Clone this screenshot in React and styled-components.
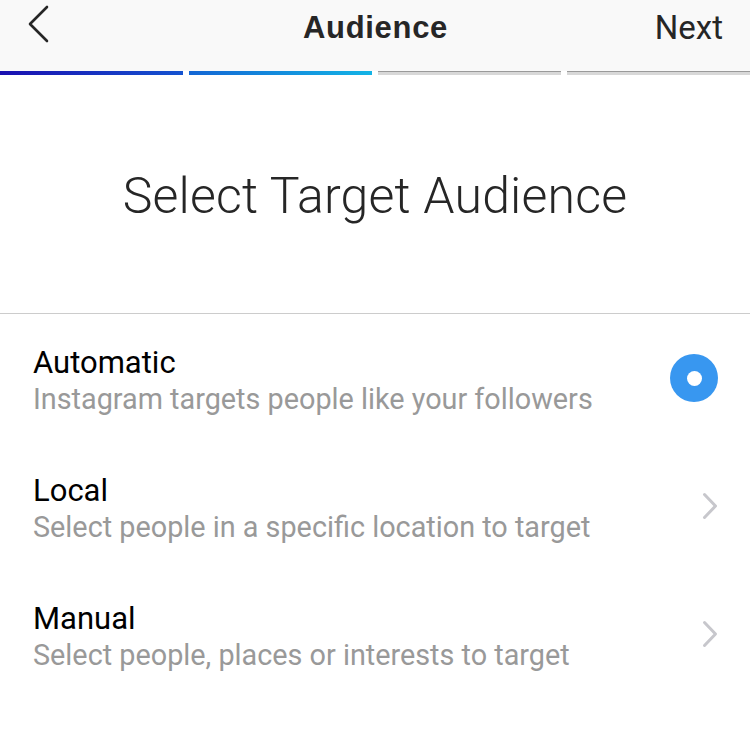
import styled, { createGlobalStyle } from "styled-components";

const GlobalStyle = createGlobalStyle`
  body {
    margin: 0;
    background: #ffffff;
    font-family: "Roboto", "Liberation Sans", sans-serif;
    color: #262626;
  }
`;

const options = [
  { title: "Automatic", text: "Instagram targets people like your followers", kind: "radio" },
  { title: "Local", text: "Select people in a specific location to target", kind: "chevron" },
  { title: "Manual", text: "Select people, places or interests to target", kind: "chevron" },
];

const steps = ["done", "current", "todo", "todo"];

const App = () => {
  return (
    <Page>
      <GlobalStyle />
      <Header>
        <BackButton aria-label="Back">
          <svg width="22" height="38" viewBox="0 0 22 38">
            <path d="M19 2 L2 19 L19 36" fill="none" stroke="#262626" strokeWidth="2.6" strokeLinecap="round" strokeLinejoin="round" />
          </svg>
        </BackButton>
        <HeaderTitle>Audience</HeaderTitle>
        <NextButton>Next</NextButton>
      </Header>
      <Progress>
        {steps.map((s, i) => (
          <Segment key={i} $state={s} />
        ))}
      </Progress>
      <Hero>
        <HeroTitle>Select Target Audience</HeroTitle>
      </Hero>
      <List>
        {options.map((o) => (
          <Option key={o.title}>
            <OptionText>
              <OptionTitle>{o.title}</OptionTitle>
              <OptionSub>{o.text}</OptionSub>
            </OptionText>
            {o.kind === "radio" ? (
              <Radio />
            ) : (
              <svg width="16" height="28" viewBox="0 0 16 28">
                <path d="M2.5 2.5 L13.5 14 L2.5 25.5" fill="none" stroke="#c7c7cc" strokeWidth="3" strokeLinecap="round" strokeLinejoin="round" />
              </svg>
            )}
          </Option>
        ))}
      </List>
    </Page>
  );
};

const Page = styled.div`
  width: 750px;
  min-height: 736px;
  background: #ffffff;
`;

const Header = styled.div`
  height: 71px;
  background: #f9f9f9;
  display: grid;
  grid-template-columns: 1fr auto 1fr;
  align-items: start;
  padding: 0 27px 0 28px;
  box-sizing: border-box;
`;

const BackButton = styled.div`
  display: flex;
  padding-top: 5px;
`;

const HeaderTitle = styled.div`
  font-family: "Liberation Sans", "Roboto", sans-serif;
  font-size: 31px;
  line-height: 56px;
  font-weight: 700;
  letter-spacing: 0.7px;
  color: #262626;
`;

const NextButton = styled.div`
  justify-self: end;
  font-size: 33px;
  line-height: 56px;
  color: #262626;
`;

const Progress = styled.div`
  display: flex;
  gap: 6px;
  height: 4px;
`;

const segmentColors = {
  done: "linear-gradient(90deg, #1a0fb0, #1453d0)",
  current: "linear-gradient(90deg, #1466d4, #14b4e6)",
  todo: "#d8d8d8",
};

const Segment = styled.div`
  flex: 1;
  background: ${(p) => segmentColors[p.$state]};
  border-top: ${(p) => (p.$state === "todo" ? "1px solid #9a9a9a" : "none")};
  box-sizing: border-box;
`;

const Hero = styled.div`
  height: 239px;
  display: flex;
  align-items: center;
  justify-content: center;
  border-bottom: 1px solid #cccccc;
  padding-top: 4px;
  box-sizing: border-box;
`;

const HeroTitle = styled.h1`
  margin: 0;
  font-size: 50px;
  font-weight: 300;
  color: #262626;
  letter-spacing: 0.2px;
`;

const List = styled.div`
  display: flex;
  flex-direction: column;
`;

const Option = styled.div`
  height: 128px;
  display: flex;
  align-items: center;
  justify-content: space-between;
  padding: 0 32px 0 33px;
`;

const OptionText = styled.div`
  display: flex;
  flex-direction: column;
  padding-top: 6px;
`;

const OptionTitle = styled.div`
  font-size: 31px;
  line-height: 36px;
  color: #000000;
`;

const OptionSub = styled.div`
  font-size: 28.8px;
  line-height: 36px;
  color: #999999;
`;

const Radio = styled.div`
  width: 48px;
  height: 48px;
  border-radius: 50%;
  background: #3897f0;
  display: flex;
  align-items: center;
  justify-content: center;
  &::after {
    content: "";
    width: 15px;
    height: 15px;
    border-radius: 50%;
    background: #ffffff;
  }
`;

export default App;
